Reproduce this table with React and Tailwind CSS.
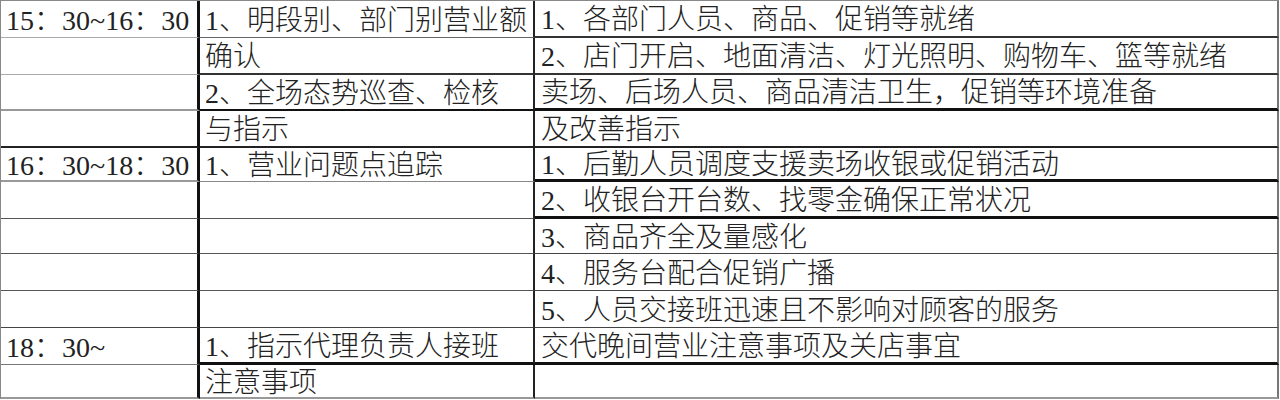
import React from "react";

const rows = [
  { t: "15：30~16：30", a: "1、明段别、部门别营业额", b: "1、各部门人员、商品、促销等就绪", h: 37, bt: "border-b border-[#aaa]", ba: "border-b border-[#666]", bb: "border-b-2 border-[#333]" },
  { t: "", a: "确认", b: "2、店门开启、地面清洁、灯光照明、购物车、篮等就绪", h: 37, bt: "border-b border-[#aaa]", ba: "border-b-2 border-[#333]", bb: "border-b-2 border-[#333]" },
  { t: "", a: "2、全场态势巡查、检核", b: "卖场、后场人员、商品清洁卫生，促销等环境准备", h: 36, bt: "border-b-2 border-[#999]", ba: "border-b-2 border-[#111]", bb: "border-b-[3px] border-[#111]" },
  { t: "", a: "与指示", b: "及改善指示", h: 37, bt: "border-b-2 border-[#222]", ba: "border-b-2 border-[#222]", bb: "border-b-2 border-[#222]" },
  { t: "16：30~18：30", a: "1、营业问题点追踪", b: "1、后勤人员调度支援卖场收银或促销活动", h: 34, bt: "border-b-2 border-[#999]", ba: "border-b border-[#888]", bb: "border-b-[3px] border-[#111]" },
  { t: "", a: "", b: "2、收银台开台数、找零金确保正常状况", h: 37, bt: "border-b border-[#555]", ba: "border-b border-[#555]", bb: "border-b-[3px] border-[#111]" },
  { t: "", a: "", b: "3、商品齐全及量感化", h: 35, bt: "border-b border-[#555]", ba: "border-b border-[#555]", bb: "border-b border-[#444]" },
  { t: "", a: "", b: "4、服务台配合促销广播", h: 37, bt: "border-b border-[#555]", ba: "border-b border-[#555]", bb: "border-b border-[#444]" },
  { t: "", a: "", b: "5、人员交接班迅速且不影响对顾客的服务", h: 37, bt: "border-b border-[#444]", ba: "border-b border-[#444]", bb: "border-b border-[#444]" },
  { t: "18：30~", a: "1、指示代理负责人接班", b: "交代晚间营业注意事项及关店事宜", h: 37, bt: "border-b border-[#777]", ba: "border-b-[3px] border-[#111]", bb: "border-b-[3px] border-[#111]" },
  { t: "", a: "注意事项", b: "", h: 34, bt: "border-b-2 border-[#999]", ba: "border-b-2 border-[#999]", bb: "border-b-2 border-[#999]" },
];

const Cell = ({ children, className, h }) => (
  <div
    className={"flex items-center overflow-hidden whitespace-nowrap pt-[3px] " + className}
    style={{ height: h }}
  >
    {children}
  </div>
);

export default function App() {
  return (
    <div
      className="w-[1280px] h-[400px] bg-white text-[#222] text-[28px] font-light leading-none"
      style={{ fontFamily: '"Liberation Serif", "Noto Sans CJK SC", serif' }}
    >
      <div className="w-[1279px] border-l border-t border-[#888]">
        {rows.map((r, i) => (
          <div key={i} className="flex">
            <Cell h={r.h} className={"w-[199px] shrink-0 pl-[5px] border-r-[3px] border-r-[#111] " + r.bt}>
              {r.t}
            </Cell>
            <Cell h={r.h} className={"w-[335px] shrink-0 pl-[5px] border-r-2 border-r-[#222] " + r.ba}>
              {r.a}
            </Cell>
            <Cell h={r.h} className={"flex-1 pl-[6px] border-r-2 border-r-[#777] " + r.bb}>
              {r.b}
            </Cell>
          </div>
        ))}
      </div>
    </div>
  );
}
